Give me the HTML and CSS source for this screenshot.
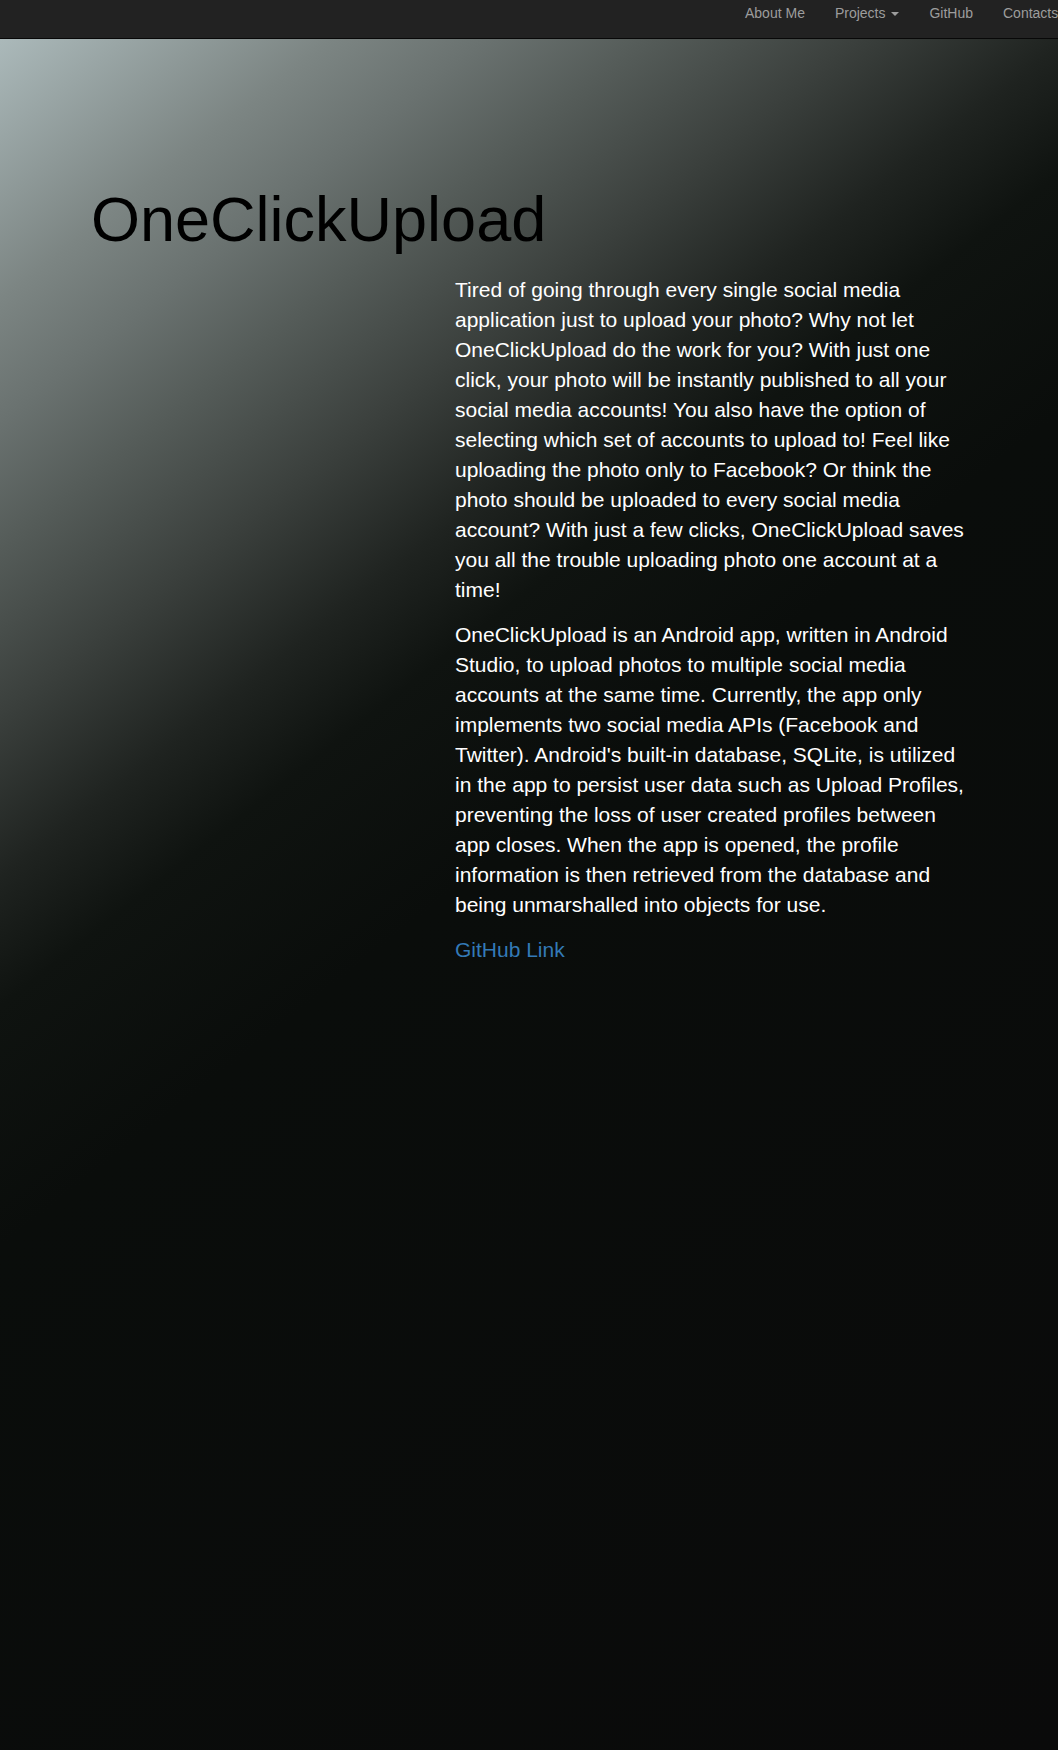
FILE: index.html
```html
<!DOCTYPE html>
<html lang="en">
<head>
<meta charset="utf-8">
<title>OneClickUpload</title>
<link rel="stylesheet" href="styles.css">
</head>
<body>
<nav class="navbar">
  <ul class="nav">
    <li><a href="#">About Me</a></li>
    <li><a href="#">Projects <span class="caret"></span></a></li>
    <li><a href="#">GitHub</a></li>
    <li><a href="#">Contacts</a></li>
  </ul>
</nav>
<main class="hero">
  <h1 class="title">OneClickUpload</h1>
  <div class="desc">
    <p>Tired of going through every single social media application just to upload your photo? Why not let OneClickUpload do the work for you? With just one click, your photo will be instantly published to all your social media accounts! You also have the option of selecting which set of accounts to upload to! Feel like uploading the photo only to Facebook? Or think the photo should be uploaded to every social media account? With just a few clicks, OneClickUpload saves you all the trouble uploading photo one account at a time!</p>
    <p>OneClickUpload is an Android app, written in Android Studio, to upload photos to multiple social media accounts at the same time. Currently, the app only implements two social media APIs (Facebook and Twitter). Android's built-in database, SQLite, is utilized in the app to persist user data such as Upload Profiles, preventing the loss of user created profiles between app closes. When the app is opened, the profile information is then retrieved from the database and being unmarshalled into objects for use.</p>
    <p><a class="link" href="#">GitHub Link</a></p>
  </div>
</main>
</body>
</html>
```

FILE: styles.css
```css
html, body {
  margin: 0;
  padding: 0;
}

body {
  font-family: "Liberation Sans", Arial, Helvetica, sans-serif;
  background: #0a0a0a;
  min-height: 100vh;
  display: flex;
  flex-direction: column;
}

.navbar {
  height: 38px;
  background: #222222;
  border-bottom: 1px solid #080808;
  overflow: hidden;
  display: flex;
  flex-shrink: 0;
}

.nav {
  list-style: none;
  margin: 0;
  padding: 0 0 0 730px;
  display: flex;
  white-space: nowrap;
}

.nav a {
  display: block;
  padding: 3px 15px 0;
  line-height: 20px;
  font-size: 14px;
  color: #9d9d9d;
  text-decoration: none;
}

.caret {
  display: inline-block;
  width: 0;
  height: 0;
  margin-left: 2px;
  vertical-align: middle;
  border-top: 4px solid;
  border-right: 4px solid transparent;
  border-left: 4px solid transparent;
}

.hero {
  flex: 1;
  padding: 146px 0 0 91px;
  background:
    linear-gradient(141.8deg,
      #abb9ba 0px,
      #7c8583 205px,
      #6a7270 300px,
      #555c59 400px,
      #3b403d 530px,
      #1f2320 660px,
      #0f1310 760px,
      #0a0d0b 950px,
      #0a0a0a 2000px);
}

.title {
  margin: 0 0 21px;
  font-size: 63px;
  line-height: 1.1;
  font-weight: 400;
  color: #000;
}

.desc {
  margin-left: 364px;
  width: 520px;
  color: #ffffff;
  font-size: 21px;
  line-height: 30px;
}

.desc p {
  margin: 0 0 15px;
}

.link {
  color: #337ab7;
  text-decoration: none;
}
```
